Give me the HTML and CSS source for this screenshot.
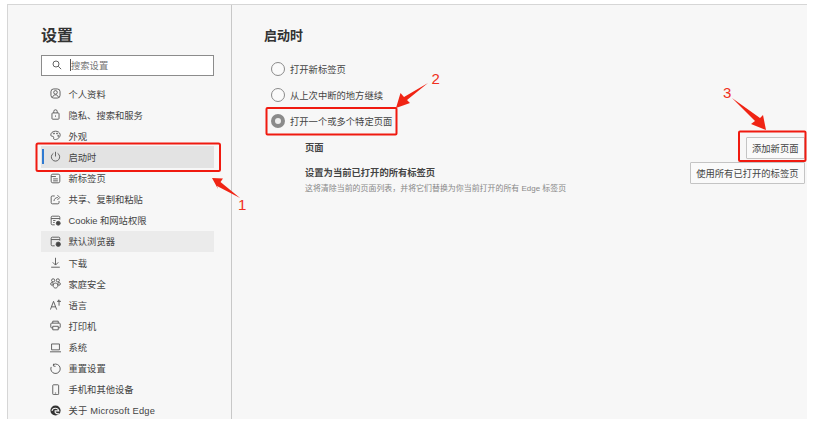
FILE: index.html
```html
<!DOCTYPE html>
<html lang="zh-CN">
<head>
<meta charset="utf-8">
<title>设置</title>
<link rel="stylesheet" href="styles.css">
</head>
<body>
<div class="app">
  <aside class="side">
    <h1 class="side-title">设置</h1>
    <div class="search">
      <svg class="search-icon" viewBox="0 0 12 12"><circle cx="4.8" cy="4.8" r="3.6"/><path d="M7.5 7.5L11 11"/></svg>
      <span class="caret"></span><span>搜索设置</span>
    </div>
    <nav class="nav">
      <div class="item"><svg class="ico" viewBox="0 0 14 14"><rect x="1.2" y="1.2" width="11.600" height="11.600" rx="3.500"/><circle cx="7" cy="5.600" r="2.300"/><path d="M3.400 11.500c.8-2.300 2-2.800 3.600-2.800s2.800.5 3.600 2.800"/></svg><span>个人资料</span></div>
      <div class="item"><svg class="ico" viewBox="0 0 14 14"><rect x="2.500" y="5" width="9" height="8" rx="1"/><path d="M4.800 5V3.200a2.200 2.200 0 0 1 4.400 0V5M7 8.200v1.600"/></svg><span>隐私、搜索和服务</span></div>
      <div class="item"><svg class="ico" viewBox="0 0 14 14"><path d="M7 1.500C3 1.500.8 4.200 1 6.500c.2 2 2.500 1.200 3.400 2 .8.8-.4 2 .4 3 1 1 3.400.8 5-.3 2-1.400 3.600-3.600 3.100-5.700C12.300 3 10 1.500 7 1.500z"/><circle cx="5" cy="4.500" r=".7"/><circle cx="9" cy="4.500" r=".7"/><circle cx="10.500" cy="7.500" r=".7"/></svg><span>外观</span></div>
      <div class="item active"><span class="bar"></span><svg class="ico" viewBox="0 0 14 14"><path d="M4.300 3a5.300 5.300 0 1 0 5.400 0M7 1v6"/></svg><span>启动时</span></div>
      <div class="item"><svg class="ico" viewBox="0 0 14 14"><path d="M1.500 3.500a2 2 0 0 1 2-2h7a2 2 0 0 1 2 2v7a2 2 0 0 1-2 2h-7a2 2 0 0 1-2-2zM1.500 4.500h6M4 7.500h6M4 10h6"/></svg><span>新标签页</span></div>
      <div class="item"><svg class="ico" viewBox="0 0 14 14"><path d="M6 2.500H3a1.500 1.500 0 0 0-1.500 1.500v7A1.500 1.500 0 0 0 3 12.500h7a1.500 1.500 0 0 0 1.500-1.500V9M5 9c.3-3 2.500-4.500 5-4.500M9.500 1.500l3 3-3 3"/></svg><span>共享、复制和粘贴</span></div>
      <div class="item"><svg class="ico" viewBox="0 0 14 14"><path d="M6 12.500H3a1.500 1.500 0 0 1-1.500-1.500V3A1.500 1.500 0 0 1 3 1.500h8A1.500 1.500 0 0 1 12.500 3v3M1.500 4.500h11M4 7h3M4 9.500h2"/><circle class="fill" cx="10.500" cy="10.500" r="2.500"/></svg><span>Cookie 和网站权限</span></div>
      <div class="item hover"><svg class="ico" viewBox="0 0 14 14"><path d="M6 12.500H3a1.500 1.500 0 0 1-1.500-1.500V3A1.500 1.500 0 0 1 3 1.500h8A1.500 1.500 0 0 1 12.500 3v3M1.500 4.500h11"/><circle class="fill" cx="10.500" cy="10.500" r="2.800"/></svg><span>默认浏览器</span></div>
      <div class="item"><svg class="ico" viewBox="0 0 14 14"><path d="M7 1v9M3.500 6.800L7 10.300l3.500-3.500M1.500 13h11"/></svg><span>下载</span></div>
      <div class="item"><svg class="ico" viewBox="0 0 14 14"><circle cx="4" cy="3" r="2"/><circle cx="10" cy="3" r="2"/><circle cx="2.500" cy="7.500" r="1.700"/><circle cx="11.500" cy="7.500" r="1.700"/><path d="M7 6.500c2 0 3 2 3 3.500s-1.500 2.800-3 2.800S4 11.500 4 10s1-3.500 3-3.500z"/></svg><span>家庭安全</span></div>
      <div class="item"><svg class="ico" viewBox="0 0 14 14"><path d="M.5 13.500L4.500 3 8.500 13.500M2 10h5M9 3h5M11.500 1v7.500M10 2.500l1.500-1.500"/></svg><span>语言</span></div>
      <div class="item"><svg class="ico" viewBox="0 0 14 14"><path d="M3.500 4V1.500h7V4M3.500 10H2a1 1 0 0 1-1-1V5a1 1 0 0 1 1-1h10a1 1 0 0 1 1 1v4a1 1 0 0 1-1 1h-1.500M3.500 8h7v4.500h-7z"/></svg><span>打印机</span></div>
      <div class="item"><svg class="ico" viewBox="0 0 14 14"><path d="M2 2.500h10v7.500H2zM0 12.500h14"/></svg><span>系统</span></div>
      <div class="item"><svg class="ico" viewBox="0 0 14 14"><path d="M4.300 2a6 6 0 1 1-2.800 3M4.500 1l-.2 2.800 2.700.5"/></svg><span>重置设置</span></div>
      <div class="item"><svg class="ico" viewBox="0 0 14 14"><rect x="3.500" y="1" width="7.500" height="12.500" rx="1"/><path d="M6.200 11.500h1.600"/></svg><span>手机和其他设备</span></div>
      <div class="item"><svg class="ico edge" viewBox="0 0 14 14"><circle class="disc" cx="7" cy="7" r="6.500"/><path class="swoosh" d="M2.500 7.500C3.500 3.200 10 3 11.200 7.500H6.500c-.6 2.500 1.800 4.300 5 3.600"/></svg><span class="about">关于 Microsoft Edge</span></div>
    </nav>
  </aside>
  <main class="main">
    <h2 class="main-title">启动时</h2>
    <div class="radios">
      <div class="radio-row"><span class="radio"></span><span>打开新标签页</span></div>
      <div class="radio-row"><span class="radio"></span><span>从上次中断的地方继续</span></div>
      <div class="radio-row"><span class="radio on"></span><span>打开一个或多个特定页面</span></div>
    </div>
    <div class="sub">
      <div class="sub-row pages">
        <span class="strong">页面</span>
        <button class="btn">添加新页面</button>
      </div>
      <div class="sub-row current">
        <div class="current-text">
          <div class="strong">设置为当前已打开的所有标签页</div>
          <div class="hint">这将清除当前的页面列表，并将它们替换为你当前打开的所有 Edge 标签页</div>
        </div>
        <button class="btn">使用所有已打开的标签页</button>
      </div>
    </div>
  </main>
</div>
<svg class="notes" viewBox="0 0 818 436">
  <rect class="box" x="36.500" y="143.500" width="183.500" height="27.500" rx="1.500"/>
  <rect class="box" x="266.500" y="108" width="130" height="26.500" rx="1"/>
  <rect class="box" x="739" y="131.500" width="66.500" height="29.500" rx="1"/>
  <path class="arrow" d="M212 178L223 178.500 220.500 182 240 198 217 186 218 189z"/>
  <path class="arrow" d="M396 108L400.500 93 404 97 428 83 407 100 410 103z"/>
  <path class="arrow" d="M766 130L751 124 755 121 732 98 760 118 763 115z"/>
  <text class="num" x="238" y="210">1</text>
  <text class="num" x="431.500" y="83.500">2</text>
  <text class="num" x="723" y="98">3</text>
</svg>
</body>
</html>
```
FILE: styles.css
```css
* { box-sizing: border-box; }
html, body { margin: 0; height: 100%; background: #fff; }
body {
  position: relative;
  width: 818px;
  height: 436px;
  overflow: hidden;
  padding: 4px 11px 17px 7px;
  font-family: "Liberation Sans", "Noto Sans CJK SC", sans-serif;
  color: #333;
}
.app {
  display: flex;
  height: 100%;
  background: #f7f7f7;
  border-top: 1px solid #d6d6d6;
  border-left: 1px solid #d6d6d6;
}
.side {
  width: 224px;
  flex: none;
  border-right: 1px solid #c8c8c8;
  padding: 20px 17px 0 33px;
}
.side-title {
  margin: 0;
  font-size: 16px;
  line-height: 22px;
  font-weight: 700;
  color: #333;
}
.search {
  display: flex;
  align-items: center;
  height: 21px;
  margin-top: 8px;
  padding: 0 0 1px 10px;
  background: #fff;
  border: 1px solid #8c8c8c;
  font-size: 9.300px;
  color: #777;
}
.search-icon { width: 10px; height: 10px; margin-right: 8px; fill: none; stroke: #555; stroke-width: 1.100; }
.caret { width: 1px; height: 12px; background: #555; }
.nav { margin-top: 7px; display: flex; flex-direction: column; }
.item {
  position: relative;
  display: flex;
  align-items: center;
  height: 21.130px;
  padding-left: 9px;
  font-size: 9.300px;
  color: #444;
  white-space: nowrap;
}
.item.active { background: #e3e3e3; }
.item.hover { background: #ebebeb; }
.bar { position: absolute; left: 1px; top: 3px; bottom: 4px; width: 2px; background: #2f7ad1; }
.ico {
  width: 11px;
  height: 11px;
  flex: none;
  margin-right: 8px;
  margin-left: -.5px;
  fill: none;
  stroke: #555;
  stroke-width: 1.150;
}
.ico .fill { fill: #444; }
.ico .disc { fill: #333; stroke: none; }
.ico .swoosh { fill: none; stroke: #f7f7f7; stroke-width: 1.400; }
.about { letter-spacing: .2px; }
.main { flex: 1; min-width: 0; padding: 21px 2px 0 32px; }
.main-title {
  margin: 0;
  font-size: 13px;
  line-height: 20px;
  font-weight: 700;
  color: #333;
}
.radios { margin-top: 9.500px; display: flex; flex-direction: column; }
.radio-row {
  display: flex;
  align-items: center;
  height: 26.300px;
  padding-left: 7px;
  font-size: 9.300px;
  color: #444;
}
.radio {
  width: 14px;
  height: 14px;
  margin-right: 5px;
  flex: none;
  border: 1px solid #8a8a8a;
  border-radius: 50%;
  background: #fafafa;
}
.radio.on { border: 4px solid #8a8a8a; background: #eee; }
.sub { padding-left: 41px; }
.sub-row { display: flex; justify-content: space-between; align-items: flex-start; }
.pages { height: 24px; margin-top: 2px; align-items: center; }
.current { margin-top: 2px; }
.current-text { padding-top: 4px; }
.strong { font-size: 9.300px; font-weight: 700; color: #444; line-height: 14px; }
.hint { font-size: 7.950px; color: #888; line-height: 11px; margin-top: 2.500px; }
.btn {
  font: inherit;
  font-size: 9.300px;
  color: #444;
  height: 22px;
  padding: 0 5.500px;
  background: #fafafa;
  border: 1px solid #c4c4c4;
  border-radius: 1px;
  white-space: nowrap;
}
.notes { position: absolute; left: 0; top: 0; width: 818px; height: 436px; pointer-events: none; }
.box { fill: none; stroke: #f01a10; stroke-width: 2; }
.arrow { fill: #f02414; }
.num { font-family: "Liberation Sans", sans-serif; font-size: 15px; fill: #f03020; }
```
